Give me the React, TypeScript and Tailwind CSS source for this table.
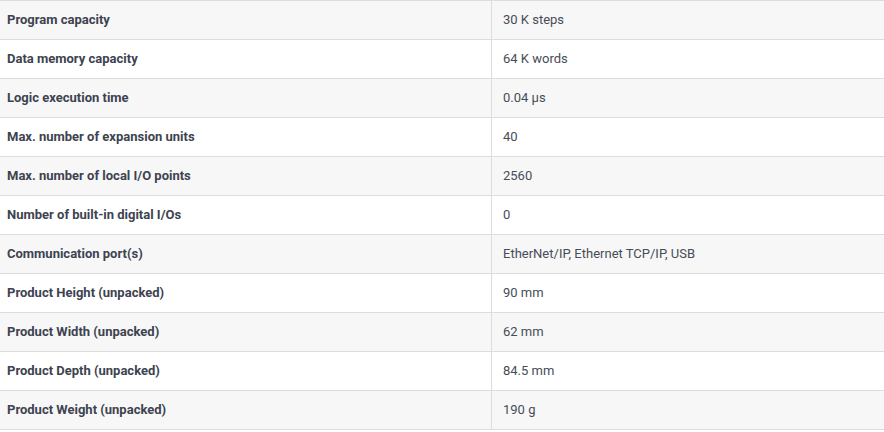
import React from 'react'

const specs: [string, string][] = [
    ['Program capacity', '30 K steps'],
    ['Data memory capacity', '64 K words'],
    ['Logic execution time', '0.04 μs'],
    ['Max. number of expansion units', '40'],
    ['Max. number of local I/O points', '2560'],
    ['Number of built-in digital I/Os', '0'],
    ['Communication port(s)', 'EtherNet/IP, Ethernet TCP/IP, USB'],
    ['Product Height (unpacked)', '90 mm'],
    ['Product Width (unpacked)', '62 mm'],
    ['Product Depth (unpacked)', '84.5 mm'],
    ['Product Weight (unpacked)', '190 g'],
]

const App = () => {
    return (
        <div className='w-[884px] bg-white font-["Roboto",sans-serif] text-[13px]'>
            <div className='border-b border-[#dddddd]'>
                {specs.map(([label, value], i) => (
                    <div
                        key={label}
                        className={`flex h-[39px] border-t border-[#dddddd] ${i % 2 === 0 ? 'bg-[#f7f7f7]' : 'bg-white'}`}
                    >
                        <div className='w-[492px] flex items-center pl-[7px] font-bold text-[#3d4350] border-r border-[#dddddd]'>{label}</div>
                        <div className='flex-1 flex items-center pl-[11px] text-[#474c58]'>{value}</div>
                    </div>
                ))}
            </div>
        </div>
    )
}

export default App
